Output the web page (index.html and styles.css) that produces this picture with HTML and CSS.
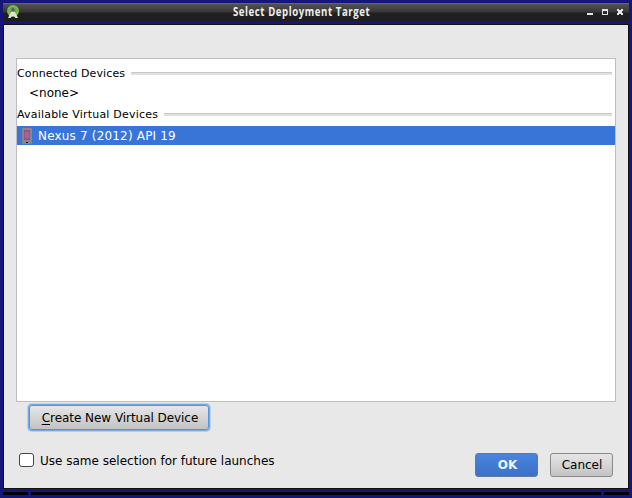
FILE: index.html
```html
<!DOCTYPE html>
<html lang="en">
<head>
<meta charset="utf-8">
<title>Select Deployment Target</title>
<link rel="stylesheet" href="styles.css">
</head>
<body>
<div class="window">
  <header class="titlebar">
    <svg class="app-icon" width="14" height="16" viewBox="0 0 14 16">
      <circle cx="7" cy="7" r="6" fill="#79b843"/>
      <circle cx="7" cy="6.500" r="3.400" fill="#71996a"/>
      <circle cx="7" cy="5.500" r="1.600" fill="#4d654b"/>
      <path d="M5 8h4l3 6H9.500L7.800 12H6.200L4.500 14H2z" fill="#dce5da"/>
    </svg>
    <h1 class="title"><span>Select Deployment Target</span></h1>
    <div class="controls">
      <svg width="38" height="8" viewBox="0 0 38 8" fill="#e4e4e4" shape-rendering="crispEdges">
        <path d="M0 4h6v2H0z"/>
        <path fill-rule="evenodd" d="M15 0h6v6h-6zM16 2h4v3h-4z"/>
        <path d="M30 0h2v1h2V0h2v2h-1v2h1v2h-2V5h-2v1h-2V4h1V2h-1z"/>
      </svg>
    </div>
  </header>
  <main class="dialog">
    <section class="devices">
      <h2 class="group connected">Connected Devices</h2>
      <div class="none">&lt;none&gt;</div>
      <h2 class="group available">Available Virtual Devices</h2>
      <div class="device">
        <svg width="10" height="16" viewBox="0 0 10 16">
          <rect width="10" height="16" rx="1" fill="#8b8788"/>
          <rect x="2" y="2" width="6" height="10" fill="#95548f"/>
          <rect x="3" y="4" width="4" height="6" fill="#a464a0"/>
          <rect x="4" y="14" width="2" height="1" fill="#111"/>
        </svg>
        <span>Nexus 7 (2012) API 19</span>
      </div>
    </section>
    <button class="button create"><span class="mnemonic">C</span>reate New Virtual Device</button>
    <footer class="footer">
      <label class="remember"><span class="checkbox"></span>Use same selection for future launches</label>
      <button class="button ok">OK</button>
      <button class="button cancel">Cancel</button>
    </footer>
  </main>
  <div class="grips"><i></i><i></i><i></i></div>
</div>
</body>
</html>
```

FILE: styles.css
```css
* { box-sizing: border-box; }

body {
  margin: 0;
  background: #191970;
  font: 12px/16px "DejaVu Sans", sans-serif;
  color: #000;
}

.window {
  width: 632px;
  height: 498px;
  padding: 3px;
  display: flex;
  flex-direction: column;
  background: #16167a;
}

.titlebar {
  height: 18px;
  flex: none;
  display: flex;
  border-top: 1px solid #656565;
  background: linear-gradient(#525252, #363636 8px, #202020 9px, #1e1e1e);
}

.app-icon { margin: 0 0 0 3px; flex: none; }

.title {
  flex: 1;
  margin: 0;
  padding-left: 213px;
  font: 700 12px/15px "Open Sans", sans-serif;
  letter-spacing: .7px;
  color: #eee;
  white-space: nowrap;
}

.title span {
  display: inline-block;
  transform: scaleX(.802);
  transform-origin: left;
}

.controls { width: 42px; height: 8px; margin-top: 5px; display: flex; }

.dialog {
  height: 465px;
  flex: none;
  margin-top: 3px;
  border: 1px solid #111;
  padding: 33px 12px 0;
  background: #e8e8e8;
}

.devices {
  width: 600px;
  height: 344px;
  border: 1px solid #bebebe;
  background: #fff;
}

.group {
  display: flex;
  align-items: center;
  gap: 6px;
  margin: 0;
  font-size: 11px;
  line-height: 14px;
  font-weight: 400;
}

.group::after {
  content: "";
  flex: 1;
  height: 2px;
  margin: 0 3px 1px 0;
  border-top: 1px solid #c8c8c8;
  background: #e0e0e0;
}

.connected { margin-top: 8px; letter-spacing: .12px; }
.available { letter-spacing: .2px; }

.none { height: 20px; padding: 4px 0 0 12px; margin-bottom: 7px; }

.device {
  height: 19px;
  margin-top: 4px;
  display: flex;
  align-items: center;
  gap: 6px;
  padding-left: 5px;
  background: #3875d7;
  color: #fff;
  letter-spacing: .18px;
}

.button {
  height: 24px;
  padding: 0;
  border: 1px solid #8a8a8a;
  border-radius: 3px;
  background: linear-gradient(#e6e6e6, #c3c3c3);
  font: 12px/16px "DejaVu Sans", sans-serif;
  color: #000;
}

.create {
  display: block;
  width: 180px;
  height: 25px;
  margin: 3px 0 0 13px;
  padding-left: 2px;
  letter-spacing: -.05px;
  border-color: #5794dc;
  box-shadow: 0 0 0 1px #76a9e4, 0 0 0 2px #b8d1ed;
}

.mnemonic { text-decoration: underline; text-underline-offset: 2px; text-decoration-thickness: 1px; }

.footer { display: flex; align-items: flex-start; margin-top: 23px; }

.remember { flex: 1; display: flex; gap: 6px; padding-left: 3px; }

.checkbox {
  width: 15px;
  height: 14px;
  border: 1px solid #444;
  border-radius: 3px;
  background: #fff;
}

.ok {
  width: 63px;
  margin-right: 12px;
  padding-left: 2px;
  border-color: #61799e;
  background: linear-gradient(#4885df, #3c70c8);
  color: #f0f5fc;
  font-weight: 700;
}

.cancel { width: 63px; margin-right: 3px; padding-left: 1px; }

.grips { display: flex; gap: 3px; height: 3px; margin-top: 3px; }
.grips i { width: 25px; background: #000; }
.grips i:nth-child(2) { flex: 1; }
```
